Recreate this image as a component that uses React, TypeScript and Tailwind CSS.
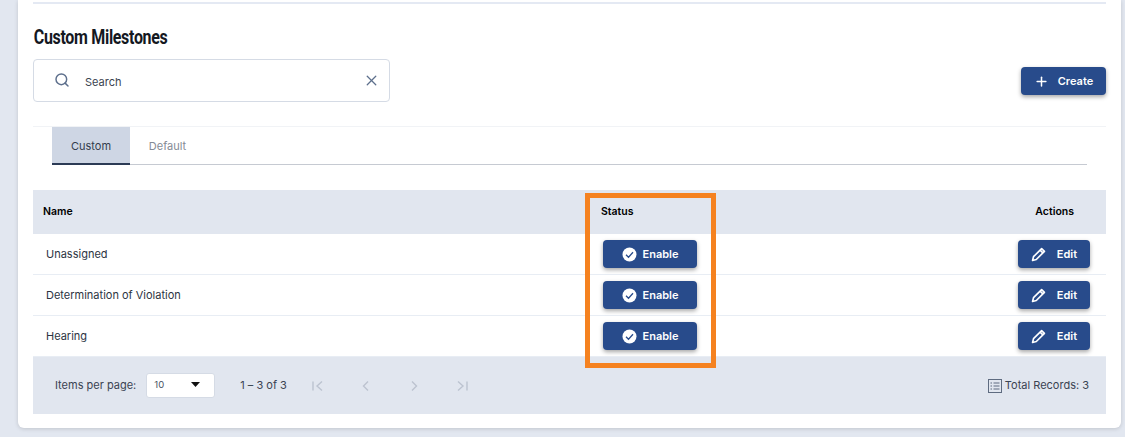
import { Search, X, Plus } from "lucide-react";
import type { ReactNode } from "react";

function Btn({ w, icon, label, gap }: { w: string; icon: ReactNode; label: string; gap?: string }) {
  return (
    <button className={`${w} h-[28px] flex items-center justify-center ${gap ?? "gap-[6px]"} rounded-[4px] bg-[#284b8b] text-white text-[11px] font-semibold shadow-[0_2px_4px_rgba(0,0,0,0.35)]`}>
      {icon}
      <span>{label}</span>
    </button>
  );
}

const EnableIcon = (
  <svg width="15" height="15" viewBox="0 0 15 15">
    <circle cx="7.5" cy="7.5" r="7" fill="#fff" />
    <path d="M4 7.7 L6.5 10.2 L11 5.3" fill="none" stroke="#284b8b" strokeWidth="1.3" />
  </svg>
);

const EditIcon = (
  <svg width="15" height="15" viewBox="0 0 24 24" fill="none" stroke="#fff" strokeWidth="2.6" strokeLinejoin="round">
    <path d="M2.5 21.5 L4 15.5 L17 2.5 L21.5 7 L8.5 20 Z" />
    <path d="M14.5 5 L19 9.5" />
  </svg>
);

function Row({ name }: { name: string }) {
  return (
    <div className="h-[41px] grid grid-cols-[557px_1fr_auto] items-center border-b border-[#e8edf4] pl-[13px] pr-[16px] last:border-b-0">
      <span className="text-[11px] text-[#2c3442]">{name}</span>
      <Btn w="w-[94px]" icon={EnableIcon} label="Enable" />
      <Btn w="w-[72px]" icon={EditIcon} label="Edit" gap="gap-[11px]" />
    </div>
  );
}

export default function App() {
  return (
    <div className="w-[1125px] h-[437px] bg-[#e2e7f0] pl-[18px] pr-[4px] overflow-hidden relative" style={{ fontFamily: '"Inter", "Noto Sans", sans-serif' }}>
      <div className="w-full h-[428px] bg-white rounded-b-[6px] shadow-[0_1px_4px_rgba(0,0,0,0.15)] px-[15px] pt-[2px]">
        <div className="h-[2px] bg-[#e4e9f3]" />
        <h2 className="mt-[21px] pl-[1px] h-[24px] leading-[24px] text-[20px] font-bold text-[#14181f] tracking-[-0.4px] scale-x-[0.8] origin-left whitespace-nowrap" style={{ fontFamily: '"Roboto", sans-serif' }}>
          Custom Milestones
        </h2>
        <div className="mt-[10px] flex items-start justify-between">
          <div className="w-[357px] h-[43px] border border-[#d5dbe5] rounded-[4px] flex items-center pl-[20px] pr-[9px]">
            <Search size={16} className="text-[#5d6f8c] -mt-[1px]" strokeWidth={2.2} />
            <span className="ml-[15px] mt-[3px] text-[11px] text-[#3b4350] flex-1">Search</span>
            <X size={17} className="text-[#5d6f8c]" strokeWidth={1.8} />
          </div>
          <div className="mt-[8px]">
            <Btn w="w-[85px]" icon={<Plus size={15} strokeWidth={2.4} />} label="Create" gap="gap-[9px]" />
          </div>
        </div>
        <div className="mt-[24px] border-t border-[#f1f3f6] px-[19px]">
          <div className="flex h-[38px] border-b border-[#c6cad2]">
            <div className="w-[78px] h-[38px] pt-[3px] bg-[#ced6e4] border-b-2 border-[#2b3a55] flex items-center justify-center text-[11px] text-[#333d4e]">Custom</div>
            <div className="w-[75px] pt-[1px] flex items-center justify-center text-[11px] text-[#858b96]">Default</div>
          </div>
        </div>
        <div className="mt-[25px]">
          <div className="h-[44px] bg-[#e1e6ef] grid grid-cols-[558px_1fr_auto] items-center pl-[10px] pr-[32px] text-[10.5px] font-semibold text-black">
            <span>Name</span>
            <span>Status</span>
            <span>Actions</span>
          </div>
          <Row name="Unassigned" />
          <Row name="Determination of Violation" />
          <Row name="Hearing" />
          <div className="h-[57px] bg-[#e1e6ef] flex items-center pl-[22px] pr-[17px] text-[11px] text-[#3a4352]">
            <span>Items per page:</span>
            <div className="ml-[10px] w-[69px] h-[25px] bg-white border border-[#d5dbe5] rounded-[3px] flex items-center justify-between pl-[7px] pr-[14px] text-[9.5px] text-[#4b5465]">
              <span>10</span>
              <svg width="9" height="5" viewBox="0 0 9 5" className="-mt-[3px]"><path d="M0 0 H9 L4.5 5 Z" fill="#111" /></svg>
            </div>
            <span className="ml-[25px] w-[46px] whitespace-nowrap">1 – 3 of 3</span>
            <div className="ml-[25px] flex items-center gap-[34px] text-[#bcc3d0]">
              <svg width="14" height="14" viewBox="0 0 14 14" fill="none" stroke="currentColor" strokeWidth="1.4"><path d="M2 2.5 V11.5 M11 2.5 L6 7 L11 11.5" /></svg>
              <svg width="14" height="14" viewBox="0 0 14 14" fill="none" stroke="currentColor" strokeWidth="1.4"><path d="M9 2.5 L4.5 7 L9 11.5" /></svg>
              <svg width="14" height="14" viewBox="0 0 14 14" fill="none" stroke="currentColor" strokeWidth="1.4"><path d="M5 2.5 L9.5 7 L5 11.5" /></svg>
              <svg width="14" height="14" viewBox="0 0 14 14" fill="none" stroke="currentColor" strokeWidth="1.4"><path d="M3 2.5 L8 7 L3 11.5 M12 2.5 V11.5" /></svg>
            </div>
            <div className="ml-auto flex items-center gap-[3px]">
              <svg width="14" height="14" viewBox="0 0 14 14" fill="none" stroke="#5e6b80" strokeWidth="1">
                <rect x="0.5" y="0.5" width="13" height="13" />
                <path d="M2.5 4 H4 M5.5 4 H11.5 M2.5 7 H4 M5.5 7 H11.5 M2.5 10 H4 M5.5 10 H11.5" />
              </svg>
              <span>Total Records: 3</span>
            </div>
          </div>
        </div>
      </div>
      <div className="absolute left-[585px] top-[193px] w-[131px] h-[175px] border-[5px] border-[#f58220]" />
    </div>
  );
}
